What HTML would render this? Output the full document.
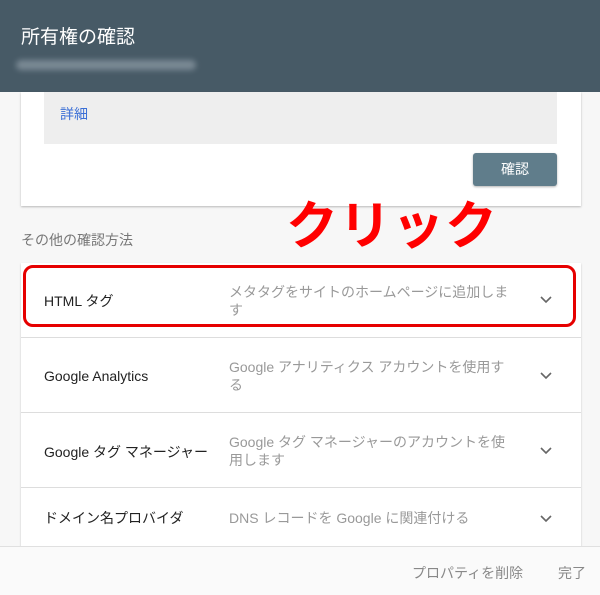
<!DOCTYPE html>
<html><head><meta charset="utf-8"><style>
*{margin:0;padding:0;box-sizing:border-box}
body{width:600px;height:595px;overflow:hidden;background:#f7f7f7;font-family:"Liberation Sans","Noto Sans CJK JP",sans-serif;position:relative}
.hdr{position:absolute;left:0;top:0;width:600px;height:92px;background:#475a66}
.hdr h1{position:absolute;left:21px;top:22px;font-size:19px;font-weight:normal;color:#fff}
.url{position:absolute;left:16px;top:60px;width:180px;height:10px;background:#8795a0;border-radius:5px;filter:blur(3px);opacity:.8}
.card1{position:absolute;left:21px;top:92px;width:560px;height:114px;background:#fff;box-shadow:0 1px 2px rgba(0,0,0,.25)}
.gbox{position:absolute;left:23px;top:0;width:513px;height:52px;background:#eee}
.gbox a{position:absolute;left:16px;top:12px;font-size:14px;color:#3b6fd6}
.btn{position:absolute;left:452px;top:61px;width:84px;height:33px;background:#607d8b;border-radius:3px;color:#fff;font-size:14px;text-align:center;line-height:33px;box-shadow:0 1px 2px rgba(0,0,0,.3)}
.click{position:absolute;left:286px;top:184px;font-size:52px;font-weight:bold;color:#f00;letter-spacing:1px}
.sub{position:absolute;left:21px;top:230px;font-size:14px;color:#777}
.list{position:absolute;left:21px;top:263px;width:560px;height:290px;background:#fff;box-shadow:0 1px 2px rgba(0,0,0,.2)}
.row{position:absolute;left:0;width:560px;border-bottom:1px solid #ddd}
.row .t{position:absolute;left:23px;font-size:14px;color:#222}
.row .d{position:absolute;left:208px;width:300px;font-size:14px;color:#999;line-height:18px}
.row svg{position:absolute;left:518px}
.red{position:absolute;left:23px;top:265px;width:553px;height:62px;border:3px solid #e60000;border-radius:10px}
.foot{position:absolute;left:0;top:546px;width:600px;height:49px;background:#fafafa;border-top:1px solid #e0e0e0}
.foot span{position:absolute;top:16px;font-size:14px;color:#888}
</style></head><body>
<div class="hdr"><h1>所有権の確認</h1><div class="url"></div></div>
<div class="card1"><div class="gbox"><a>詳細</a></div><div class="btn">確認</div></div>
<div class="sub">その他の確認方法</div>
<div class="list">
<div class="row" style="top:0;height:75px"><div class="t" style="top:28px">HTML タグ</div><div class="d" style="top:20px">メタタグをサイトのホームページに追加しま<br>す</div><svg style="top:29px" width="14" height="14" viewBox="0 0 14 14"><path d="M2 5l5 5 5-5" fill="none" stroke="#666" stroke-width="1.6"/></svg></div>
<div class="row" style="top:75px;height:75px"><div class="t" style="top:30px">Google Analytics</div><div class="d" style="top:20px">Google アナリティクス アカウントを使用す<br>る</div><svg style="top:30px" width="14" height="14" viewBox="0 0 14 14"><path d="M2 5l5 5 5-5" fill="none" stroke="#666" stroke-width="1.6"/></svg></div>
<div class="row" style="top:150px;height:75px"><div class="t" style="top:29px">Google タグ マネージャー</div><div class="d" style="top:20px">Google タグ マネージャーのアカウントを使<br>用します</div><svg style="top:30px" width="14" height="14" viewBox="0 0 14 14"><path d="M2 5l5 5 5-5" fill="none" stroke="#666" stroke-width="1.6"/></svg></div>
<div class="row" style="top:225px;height:65px;border:none"><div class="t" style="top:20px">ドメイン名プロバイダ</div><div class="d" style="top:21px">DNS レコードを Google に関連付ける</div><svg style="top:23px" width="14" height="14" viewBox="0 0 14 14"><path d="M2 5l5 5 5-5" fill="none" stroke="#666" stroke-width="1.6"/></svg></div>
</div>
<div class="red"></div>
<div class="click">クリック</div>
<div class="foot"><span style="left:412px">プロパティを削除</span><span style="left:558px">完了</span></div>
</body></html>
